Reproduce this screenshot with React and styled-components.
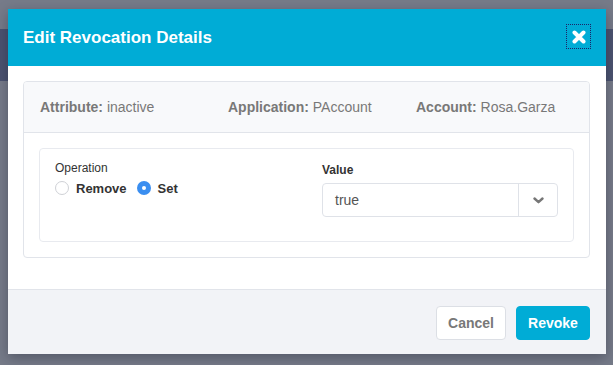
import styled, { createGlobalStyle } from 'styled-components'

const GlobalStyle = createGlobalStyle`
    html, body {
        margin: 0;
        padding: 0;
    }
    body {
        font-family: 'Liberation Sans', Arial, Helvetica, sans-serif;
    }
`

const Backdrop = styled.div`
    position: relative;
    width: 100%;
    height: 100vh;
    overflow: hidden;
    background: #767b89;
    padding-top: 29px;
    box-sizing: border-box;
`

const PageBand = styled.div`
    height: 52px;
    background: #4b5370;
`

const Modal = styled.div`
    position: absolute;
    top: 9px;
    left: 8px;
    width: 598px;
    background: #ffffff;
    box-shadow: 0 4px 12px rgba(20, 24, 40, 0.35);
`

const Header = styled.div`
    height: 57px;
    background: #00acd6;
    display: flex;
    align-items: center;
    justify-content: space-between;
    padding: 0 15px 0 15px;
`

const Title = styled.h2`
    margin: 0;
    color: #ffffff;
    font-size: 17px;
    font-weight: 700;
`

const CloseButton = styled.div`
    width: 25px;
    height: 25px;
    box-sizing: border-box;
    border: 1px dotted #1c2468;
    display: flex;
    align-items: center;
    justify-content: center;
    margin-top: -2px;
`

const Body = styled.div`
    padding: 15px 16px 31px 15px;
`

const Panel = styled.div`
    border: 1px solid #e1e4ea;
    border-radius: 4px;
    overflow: hidden;
`

const InfoBar = styled.div`
    height: 50px;
    background: #f8f9fb;
    border-bottom: 1px solid #e1e4ea;
    display: flex;
    align-items: center;
    padding-left: 16px;
    font-size: 14px;
    color: #787878;
`

const InfoItem = styled.div`
    width: 188px;
    flex-shrink: 0;
    white-space: nowrap;
    b {
        font-weight: 700;
    }
`

const PanelBody = styled.div`
    padding: 15px;
`

const Card = styled.div`
    height: 94px;
    box-sizing: border-box;
    border: 1px solid #e8eaef;
    border-radius: 4px;
    padding: 12px 15px 0 15px;
    display: grid;
    grid-template-columns: 1fr 236px;
`

const FieldLabel = styled.div`
    font-size: 12px;
    line-height: 15px;
    color: #333333;
    font-weight: ${props => props.bold ? 700 : 400};
    margin-top: ${props => props.bold ? '2px' : '0'};
    margin-bottom: ${props => props.bold ? '5px' : '0'};
`

const RadioRow = styled.div`
    display: flex;
    align-items: center;
    margin-top: 3px;
    height: 18px;
`

const RadioDot = styled.span`
    width: 14px;
    height: 14px;
    box-sizing: border-box;
    border-radius: 50%;
    border: ${props => props.checked ? 'none' : '1px solid #cfd1d6'};
    background: ${props => props.checked ? '#3a8ef0' : '#ffffff'};
    display: flex;
    align-items: center;
    justify-content: center;
    margin-right: 7px;
    &::after {
        content: '';
        width: 4px;
        height: 4px;
        border-radius: 50%;
        background: #ffffff;
        display: ${props => props.checked ? 'block' : 'none'};
    }
`

const RadioText = styled.span`
    font-size: 13px;
    font-weight: 700;
    color: #333333;
    margin-right: 10px;
`

const Select = styled.div`
    height: 34px;
    box-sizing: border-box;
    border: 1px solid #dfe2e8;
    border-radius: 4px;
    display: flex;
`

const SelectValue = styled.div`
    flex: 1;
    display: flex;
    align-items: center;
    padding-left: 12px;
    font-size: 14px;
    color: #555555;
`

const SelectToggle = styled.div`
    width: 38px;
    border-left: 1px solid #dfe2e8;
    display: flex;
    align-items: center;
    justify-content: center;
`

const Footer = styled.div`
    height: 64px;
    background: #f2f3f7;
    border-top: 1px solid #e1e4ea;
    display: flex;
    align-items: center;
    justify-content: flex-end;
    gap: 10px;
    padding-right: 16px;
`

const Button = styled.button`
    height: 34px;
    box-sizing: border-box;
    border-radius: 4px;
    font-family: inherit;
    font-size: 14px;
    font-weight: 700;
    padding: 0;
    width: ${props => props.primary ? '74px' : '70px'};
    border: 1px solid ${props => props.primary ? '#00acd6' : '#dcdfe5'};
    background: ${props => props.primary ? '#00acd6' : '#ffffff'};
    color: ${props => props.primary ? '#ffffff' : '#787878'};
    margin-top: 1px;
`

const App = () => {
    return (
        <>
            <GlobalStyle />
            <Backdrop>
                <PageBand />
                <Modal>
                    <Header>
                        <Title>Edit Revocation Details</Title>
                        <CloseButton>
                            <svg width="14" height="14" viewBox="0 0 14 14">
                                <path d="M2.5 2.5 L11.5 11.5 M11.5 2.5 L2.5 11.5" stroke="#fff" strokeWidth="4" strokeLinecap="round" />
                            </svg>
                        </CloseButton>
                    </Header>
                    <Body>
                        <Panel>
                            <InfoBar>
                                <InfoItem><b>Attribute:</b> inactive</InfoItem>
                                <InfoItem><b>Application:</b> PAccount</InfoItem>
                                <InfoItem><b>Account:</b> Rosa.Garza</InfoItem>
                            </InfoBar>
                            <PanelBody>
                                <Card>
                                    <div>
                                        <FieldLabel>Operation</FieldLabel>
                                        <RadioRow>
                                            <RadioDot />
                                            <RadioText>Remove</RadioText>
                                            <RadioDot checked />
                                            <RadioText>Set</RadioText>
                                        </RadioRow>
                                    </div>
                                    <div>
                                        <FieldLabel bold>Value</FieldLabel>
                                        <Select>
                                            <SelectValue>true</SelectValue>
                                            <SelectToggle>
                                                <svg width="11" height="7" viewBox="0 0 11 7">
                                                    <polyline points="1.5,1.5 5.5,5.2 9.5,1.5" fill="none" stroke="#777" strokeWidth="2.4" strokeLinecap="round" strokeLinejoin="round" />
                                                </svg>
                                            </SelectToggle>
                                        </Select>
                                    </div>
                                </Card>
                            </PanelBody>
                        </Panel>
                    </Body>
                    <Footer>
                        <Button>Cancel</Button>
                        <Button primary>Revoke</Button>
                    </Footer>
                </Modal>
            </Backdrop>
        </>
    )
}

export default App
